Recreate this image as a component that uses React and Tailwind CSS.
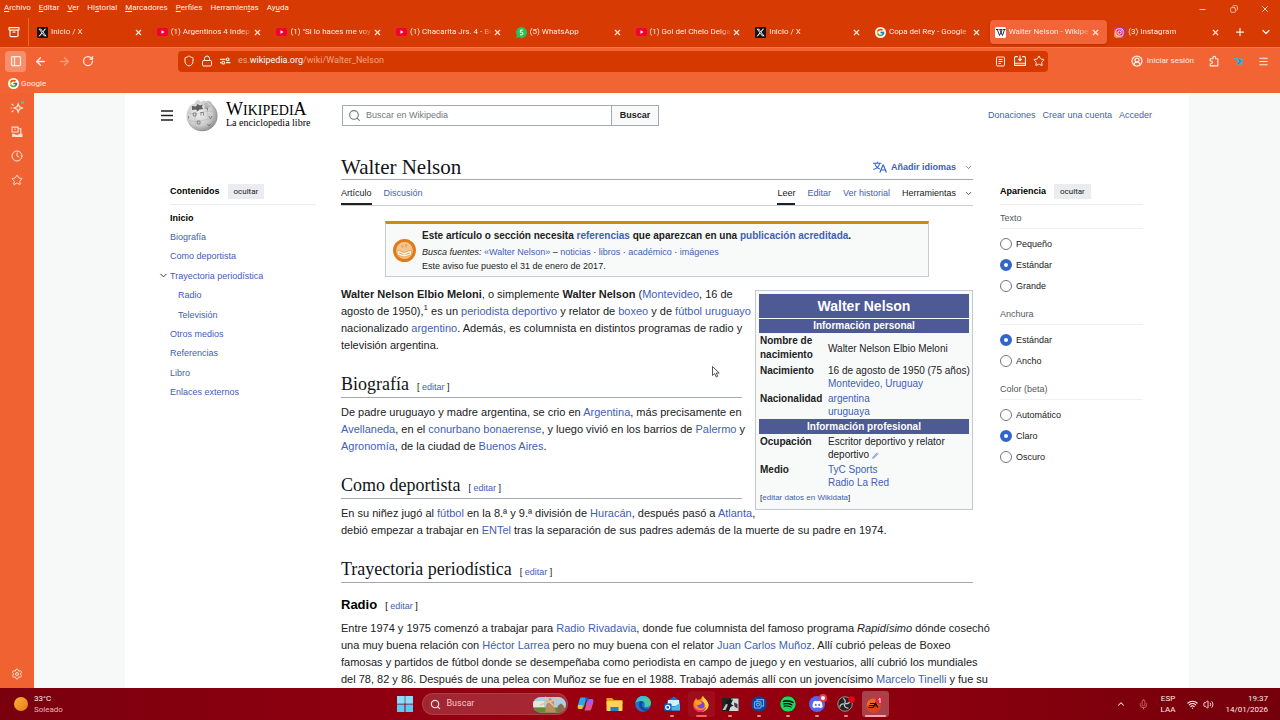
import React from "react";
import {
  Archive, X, Plus, ChevronDown, ChevronUp, Minus, Copy, PanelLeft, ArrowLeft, ArrowRight, RotateCw,
  Shield, Lock, Star, CircleUserRound, Menu, Clock, Settings, Search, Mic, Wifi, Volume2,
} from "lucide-react";
import { FaXTwitter, FaInstagram, FaSpotify, FaDiscord } from "react-icons/fa6";
import { FcGoogle } from "react-icons/fc";

/* ---------- Favicons ---------- */

const XIcon = () => (
  <span className="flex size-[11px] items-center justify-center rounded-[1px] bg-[#141414] text-white">
    <FaXTwitter size={9} />
  </span>
);
const YouTube = () => (
  <svg viewBox="0 0 22 16" className="h-2 w-[11px]">
    <rect width="22" height="16" rx="4" fill="#f00034" />
    <path d="M9 4.500v7l6-3.500z" fill="#fff" />
  </svg>
);
const WhatsApp = () => (
  <svg viewBox="0 0 22 22" className="size-[11px]">
    <path d="M11 0a11 11 0 1 1-5.300 20.700L0 22l1.500-5.500A11 11 0 0 1 11 0z" fill="#25c459" />
    <path d="M14 6H9l-.6 4.600c2-1 5.400-.6 5.400 2.400 0 3-3.600 3.500-5.800 2" fill="none" stroke="#fff" strokeWidth="2" />
  </svg>
);
const Google = () => (
  <span className="flex size-[11px] items-center justify-center rounded-full bg-white">
    <FcGoogle size={9} />
  </span>
);
const WikiW = () => (
  <svg viewBox="0 0 22 22" className="size-[11px]">
    <rect width="22" height="22" rx="3" fill="#fff" />
    <path d="M2 5h5M9 5h5M16 5h5M4.500 5l4.500 12 5.500-12M9.500 5L15 17l4-12" fill="none" stroke="#111" strokeWidth="1.700" />
  </svg>
);
const Instagram = () => (
  <span className="flex size-[11px] items-center justify-center rounded-[3px] bg-linear-to-tr from-[#fdb42c] via-[#e1246b] to-[#8a24d8] text-white">
    <FaInstagram size={9} />
  </span>
);

const tabs = [
  { icon: XIcon, title: "Inicio / X" },
  { icon: YouTube, title: "(1) Argentinos 4 Indep" },
  { icon: YouTube, title: "(1) \"Si lo haces me voy\"" },
  { icon: YouTube, title: "(1) Chacarita Jrs. 4 - Bo" },
  { icon: WhatsApp, title: "(5) WhatsApp" },
  { icon: YouTube, title: "(1) Gol del Chelo Delga" },
  { icon: XIcon, title: "Inicio / X" },
  { icon: Google, title: "Copa del Rey - Google" },
  { icon: WikiW, title: "Walter Nelson - Wikipe", active: true },
  { icon: Instagram, title: "(3) Instagram" },
];

const menus = [
  ["", "A", "rchivo"], ["", "E", "ditar"], ["", "V", "er"], ["Hi", "s", "torial"],
  ["", "M", "arcadores"], ["", "P", "erfiles"], ["Herramien", "t", "as"], ["Ay", "u", "da"],
];

/* ---------- Browser chrome ---------- */

function MenuBar() {
  return (
    <div className="flex h-[18px] items-center justify-between pl-1">
      <nav className="flex gap-2 pb-[2px]" aria-label="Menú">
        {menus.map(([a, b, c]) => (
          <button key={a + b + c} className="leading-[12px]">{a}<u>{b}</u>{c}</button>
        ))}
      </nav>
      <div className="flex items-center">
        <button aria-label="Minimizar" className="flex w-[31px] justify-center"><Minus size={9} /></button>
        <button aria-label="Restaurar" className="flex w-[31px] justify-center"><Copy size={8} className="-scale-x-100" /></button>
        <button aria-label="Cerrar" className="flex w-[31px] justify-center"><X size={10} /></button>
      </div>
    </div>
  );
}

function TabBar() {
  return (
    <div className="flex h-[29px] items-center pb-px">
      <button aria-label="Ver pestañas" className="flex h-7 w-[29px] items-center justify-center border-r border-[#f0622f]">
        <Archive size={12} strokeWidth={2.500} />
      </button>
      <div className="flex min-w-0 flex-1 pl-[2px]">
        {tabs.map(({ icon: Icon, title, active }, i) => (
          <div key={i} className={"mx-px flex h-6 min-w-0 flex-1 items-center rounded-[4px] pl-[5px] pr-[7px] " + (active ? "bg-[#f26539] shadow-sm" : "")}>
            <span className="flex w-[11px] shrink-0 justify-center"><Icon /></span>
            <span className="ml-[3px] min-w-0 flex-1 whitespace-nowrap mask-r-from-85%">{title}</span>
            <button aria-label={"Cerrar " + title} className="shrink-0"><X size={9} strokeWidth={3} /></button>
          </div>
        ))}
      </div>
      <button aria-label="Nueva pestaña" className="flex w-6 justify-center"><Plus size={12} strokeWidth={2.500} /></button>
      <button aria-label="Listar pestañas" className="flex w-7 justify-center"><ChevronDown size={12} strokeWidth={2.500} /></button>
    </div>
  );
}

const Perms = () => (
  <svg viewBox="0 0 20 14" className="h-2 w-[11px]" fill="none" stroke="currentColor" strokeWidth="2">
    <path d="M0 4h10M11 10h8M0 10h3" /><circle cx="14" cy="4" r="2.500" /><circle cx="6" cy="10" r="2.500" />
  </svg>
);
const Reader = () => (
  <svg viewBox="0 0 22 22" className="size-[11px]" fill="none" stroke="currentColor" strokeWidth="2">
    <rect x="3" y="2" width="16" height="18" rx="2" /><path d="M7 7h8M7 11h8M7 15h5" />
  </svg>
);
const Install = () => (
  <svg viewBox="0 0 22 22" className="size-3" fill="none" stroke="currentColor" strokeWidth="2">
    <path d="M7 3H3a2 2 0 0 0-2 2v14h20V5a2 2 0 0 0-2-2h-4M1 15h20M11 1v9M7.500 7L11 10.500 14.500 7" />
  </svg>
);
const Extension = () => (
  <svg viewBox="0 0 22 22" className="size-3" fill="none" stroke="currentColor" strokeWidth="2" strokeLinejoin="round">
    <path d="M4 7h5V5a2.500 2.500 0 0 1 5 0v2h4v13H4v-4h1.500a2.500 2.500 0 0 0 0-5H4z" />
  </svg>
);
const Bird = () => (
  <svg viewBox="0 0 22 18" className="h-[9px] w-[11px]">
    <path d="M1 2h8l3 3 4-3 5 4-3 2 1 5-4 4-4-3-5 2 3-7-2-4H1z" fill="#36b6d6" />
    <path d="M12 5l3 4-5 5" stroke="#1f6f93" strokeWidth="2" fill="none" />
  </svg>
);

function NavBar() {
  return (
    <div className="flex h-[27px] items-center border-t border-[#f47a50]">
      <div className="flex w-[178px] items-center pl-[5px]">
        <button aria-label="Barra lateral" className="mr-[2px] flex size-[21px] items-center justify-center rounded-[4px] bg-[#f78f6c]"><PanelLeft size={12} strokeWidth={2.500} /></button>
        <button aria-label="Atrás" className="flex w-6 justify-center"><ArrowLeft size={13} strokeWidth={2.500} /></button>
        <button aria-label="Adelante" className="flex w-6 justify-center opacity-40"><ArrowRight size={13} strokeWidth={2.500} /></button>
        <button aria-label="Recargar" className="flex w-6 justify-center"><RotateCw size={12} strokeWidth={2.500} /></button>
      </div>
      <div className="flex h-[21px] min-w-0 flex-1 items-center rounded-[4px] bg-[#d63900] pl-1">
        <button aria-label="Protección" className="flex w-[19px] justify-start pl-px"><Shield size={12} /></button>
        <button aria-label="Seguridad" className="flex w-[19px] justify-start"><Lock size={12} /></button>
        <button aria-label="Permisos" className="flex w-[18px] justify-start"><Perms /></button>
        <div role="textbox" aria-label="Dirección" className="flex-1 whitespace-nowrap text-[9px] text-[#f5a184]">
          es.<span className="text-white">wikipedia.org</span>/wiki/Walter_Nelson
        </div>
        <button aria-label="Vista de lectura" className="flex w-[19px] justify-center"><Reader /></button>
        <button aria-label="Instalar" className="flex w-[19px] justify-center"><Install /></button>
        <button aria-label="Marcar página" className="flex w-[19px] justify-center"><Star size={12} /></button>
      </div>
      <div className="flex w-[232px] items-center justify-end pr-1">
        <button className="mr-[7px] flex items-center gap-[4px] whitespace-nowrap"><CircleUserRound size={12} strokeWidth={2.500} />Iniciar sesión</button>
        <button aria-label="Extensiones" className="flex w-[25px] justify-center"><Extension /></button>
        <button aria-label="Complemento" className="flex w-[25px] justify-center"><Bird /></button>
        <button aria-label="Menú de la aplicación" className="flex w-[25px] justify-center"><Menu size={11} strokeWidth={2.500} /></button>
      </div>
    </div>
  );
}

const Sparkle = () => (
  <svg viewBox="0 0 24 24" className="size-[14px]" fill="none" stroke="currentColor" strokeWidth="2">
    <path d="M14 5l2 5 5 2-5 2-2 5-2-5-5-2 5-2z" />
    <path d="M3 5l3 3M3 19l3-3M1 12h2" />
    <rect x="19" y="0" width="5" height="5" fill="#6fb583" stroke="none" />
  </svg>
);
const Devices = () => (
  <svg viewBox="0 0 22 22" className="size-3" fill="none" stroke="currentColor" strokeWidth="2">
    <path d="M2 2h11v9H2zM6 6h3M13 5h5v10" /><path d="M2 14h4l2 2h5l2-2h6v6H2z" fill="currentColor" stroke="none" />
  </svg>
);

function SideBar() {
  return (
    <aside className="flex w-[34px] shrink-0 flex-col items-center bg-[#f16232] pb-2 pt-[3px] text-[#ffe3d4]">
      <button aria-label="Asistente" className="flex h-6 items-center"><Sparkle /></button>
      <button aria-label="Pestañas de otros dispositivos" className="flex h-6 items-center"><Devices /></button>
      <button aria-label="Historial" className="flex h-6 items-center"><Clock size={12} /></button>
      <button aria-label="Marcadores" className="flex h-6 items-center"><Star size={12} /></button>
      <button aria-label="Configuración" className="mt-auto"><Settings size={12} /></button>
    </aside>
  );
}

/* ---------- Wikipedia ---------- */

const A = ({ children }) => <a href="#" className="text-[#3f60b5]">{children}</a>;

const Globe = () => (
  <svg viewBox="0 0 66 66" className="size-[33px]">
    <defs>
      <radialGradient id="globe" cx="0.400" cy="0.400" r="0.650">
        <stop offset="0" stopColor="#f1f1f1" /><stop offset="0.650" stopColor="#cbcbcb" /><stop offset="1" stopColor="#858585" />
      </radialGradient>
    </defs>
    <path d="M20 4l6-2 3 4 6-3 5 2 4-2 6 3 2 4A31 31 0 1 1 11 11l6-2z" fill="url(#globe)" />
    <path d="M12 14l8 1 3-5 5 3 5-2-1 6 3 3-8 1-4 4-3-4-8 1z" fill="#606060" />
    <path d="M36 9l6-2 1 5 7 2-5 4-7-2z" fill="#b5b5b5" />
    <g fill="none" stroke="#b3b3b3" strokeWidth="1">
      <path d="M3 27c10 4 18 3 28 0s20-3 32 0M3 42c12 4 20 4 30 1s20-3 28-1M21 24c-4 12-4 26 1 37M40 16c5 12 6 32 1 47M52 12c6 10 8 26 5 38" />
    </g>
    <g fill="none" stroke="#6b6b6b" strokeWidth="1.500">
      <path d="M14 28h6v6h-5zM29 27h6v6M30 27v6M37 18h6v5M46 34l3 6 3-6M22 44h6v6h-5zM43 50l3 4 3-4M5 34v5" />
    </g>
  </svg>
);

function WikiHeader() {
  return (
    <header className="flex h-[43px] items-center pl-9 pr-[37px] pt-px">
      <button aria-label="Menú principal" className="mr-[13px] text-[#202122]">
        <svg viewBox="0 0 24 22" className="h-[11px] w-3"><path d="M0 2h24M0 11h24M0 20h24" stroke="currentColor" strokeWidth="3" /></svg>
      </button>
      <a href="#" className="flex w-[156px] items-center gap-[7px] font-['Liberation_Serif',serif] text-black">
        <Globe />
        <span className="flex flex-col whitespace-nowrap">
          <span className="text-[14px] leading-[15px]"><span className="text-[18px]">W</span>IKIPEDI<span className="text-[18px]">A</span></span>
          <span className="text-[10px] leading-[10px]">La enciclopedia libre</span>
        </span>
      </a>
      <form className="flex h-[21px] w-[317px]" onSubmit={(e) => e.preventDefault()}>
        <label className="flex flex-1 items-center gap-[5px] border border-[#a2a9b1] bg-white pl-[5px] text-[#72777d]">
          <Search size={13} className="shrink-0" />
          <input aria-label="Buscar en Wikipedia" placeholder="Buscar en Wikipedia" className="w-full min-w-0 text-[9px] outline-none placeholder:text-[#72777d]" />
        </label>
        <button className="-ml-px w-12 border border-[#a2a9b1] bg-[#f8faf9] text-[9px] font-bold text-[#202122]">Buscar</button>
      </form>
      <nav aria-label="Herramientas personales" className="ml-auto flex gap-[7px]">
        <A>Donaciones</A><A>Crear una cuenta</A><A>Acceder</A>
      </nav>
    </header>
  );
}

const toc = [
  ["Biografía"], ["Como deportista"], ["Trayectoria periodística", "parent"], ["Radio", "child"], ["Televisión", "child"],
  ["Otros medios"], ["Referencias"], ["Libro"], ["Enlaces externos"],
];

const PanelHead = ({ title }) => (
  <div className="mb-[2px] flex h-[27px] items-center gap-2 border-b border-[#eaecf0]">
    <h2 className="font-bold text-black">{title}</h2>
    <button className="h-[15px] bg-[#eaecf0] px-[6px] font-['Roboto',sans-serif] text-[8px] leading-[15px]">ocultar</button>
  </div>
);

function Toc() {
  return (
    <nav aria-label="Contenidos" className="w-[146px] shrink-0 pt-[42px]">
      <PanelHead title="Contenidos" />
      <ul className="mt-[3px] grid h-[194px] auto-rows-fr items-center">
        <li className="font-bold text-black">Inicio</li>
        {toc.map(([t, kind]) => (
          <li key={t} className={kind === "child" ? "pl-2" : kind === "parent" ? "-ml-3 flex items-center gap-px" : ""}>
            {kind === "parent" && <button aria-label="Contraer sección"><ChevronDown size={11} /></button>}
            <A>{t}</A>
          </li>
        ))}
      </ul>
    </nav>
  );
}

const Option = ({ group, text, checked }) => (
  <label className="flex h-[21px] items-center gap-[4px]">
    <input type="radio" name={group} defaultChecked={checked} className="size-3 appearance-none rounded-full border border-[#72777d] bg-white checked:border-4 checked:border-[#36c]" />
    {text}
  </label>
);

const OptionGroup = ({ title, options, value }) => (
  <fieldset className="mb-[7px]">
    <legend className="mb-1 flex h-[22px] w-full items-center border-b border-[#eef0f2] text-[#54595d]">{title}</legend>
    {options.map((o) => <Option key={o} group={title} text={o} checked={o === value} />)}
  </fieldset>
);

function Appearance() {
  return (
    <aside className="w-[143px] shrink-0 pt-[42px]">
      <PanelHead title="Apariencia" />
      <OptionGroup title="Texto" options={["Pequeño", "Estándar", "Grande"]} value="Estándar" />
      <OptionGroup title="Anchura" options={["Estándar", "Ancho"]} value="Estándar" />
      <OptionGroup title="Color (beta)" options={["Automático", "Claro", "Oscuro"]} value="Claro" />
    </aside>
  );
}

const Edit = () => <span className="font-['Liberation_Sans',sans-serif] text-[9px] font-normal">[ <A>editar</A> ]</span>;

const H2 = ({ children, beside }) => (
  <div className={"mb-[6px] mt-[18px] flow-root " + (beside ? "pr-[12px]" : "")}>
    <h2 className="flex h-[26px] items-baseline gap-2 border-b border-[#a2a9b1] font-['Liberation_Serif',serif] text-[18px] leading-[24px] text-[#101418]">
      {children}<Edit />
    </h2>
  </div>
);

const P = ({ children }) => <p className="whitespace-nowrap text-[11px] leading-[17px]">{children}</p>;

function Notice() {
  return (
    <div className="mx-11 mt-[15px] flex h-14 items-center border border-t-[3px] border-[#c8ccd1] border-t-[#d88512] bg-[#f8faf9] pl-[6px]">
      <svg viewBox="0 0 50 50" className="size-[25px] shrink-0">
        <circle cx="25" cy="25" r="20" fill="#f3c48d" stroke="#e07b1c" strokeWidth="6" />
        <path d="M10 24l14 5 15-5v10l-15 4-13-4z" fill="#fff3df" stroke="#e39a4e" strokeWidth="1.500" />
        <path d="M19 15l2 4 2-4M28 14v5M26 14h5M14 30l9 3M27 33l9-3" stroke="#df8b3c" strokeWidth="1.500" fill="none" />
      </svg>
      <div className="ml-[5px] whitespace-nowrap">
        <p className="text-[10px] font-bold leading-[17px]">Este artículo o sección necesita <A>referencias</A> que aparezcan en una <A>publicación acreditada</A>.</p>
        <p className="leading-[16px]"><i>Busca fuentes:</i> <A>«Walter Nelson»</A> – <A>noticias</A> · <A>libros</A> · <A>académico</A> · <A>imágenes</A></p>
        <p className="leading-[13px]">Este aviso fue puesto el 31 de enero de 2017.</p>
      </div>
    </div>
  );
}

const Row = ({ label, children }) => (
  <tr>
    <th scope="row" className="py-px pl-px text-left align-top leading-[14px]">{label}</th>
    <td className="whitespace-nowrap py-px leading-[13px]">{children}</td>
  </tr>
);

function Infobox() {
  return (
    <div className="float-right ml-px mt-1 mb-2 w-[218px] border border-[#c4c9cf] bg-[#f8faf9] p-[3px] text-[10px]">
      <table className="w-full table-fixed border-collapse">
        <colgroup><col className="w-[69px]" /><col /></colgroup>
        <tbody>
          <tr><th colSpan={2} className="h-6 border-b border-[#f8faf9] bg-[#4d5a96] text-[14px] leading-[20px] text-white">Walter Nelson</th></tr>
          <tr><th colSpan={2} className="h-[15px] border-t border-[#f8faf9] bg-[#4d5a96] leading-[14px] text-white">Información personal</th></tr>
          <Row label={<>Nombre de<br />nacimiento</>}>Walter Nelson Elbio Meloni</Row>
          <Row label="Nacimiento">16 de agosto de 1950 (75 años)<br /><A>Montevideo, Uruguay</A></Row>
          <Row label="Nacionalidad"><A>argentina</A><br /><A>uruguaya</A></Row>
          <tr><th colSpan={2} className="h-[15px] bg-[#4d5a96] leading-[14px] text-white">Información profesional</th></tr>
          <Row label="Ocupación">
            Escritor deportivo y relator<br />deportivo{" "}
            <svg viewBox="0 0 12 12" className="inline size-[7px]"><path d="M1 11l1-3 6-6 2 2-6 6zM9 1l2 2" fill="#a9b6e8" stroke="#7384c9" /></svg>
          </Row>
          <Row label="Medio"><A>TyC Sports</A><br /><A>Radio La Red</A></Row>
        </tbody>
      </table>
      <p className="pl-px text-[8px] leading-[16px]">[<A>editar datos en Wikidata</A>]</p>
    </div>
  );
}

const LanguageIcon = () => (
  <svg viewBox="0 0 20 20" className="size-[14px]" fill="#36c">
    <path d="M20 18h-1.440a.6.6 0 0 1-.4-.12.800.8 0 0 1-.23-.31L17 15h-5l-1 2.540a.8.8 0 0 1-.22.300.6.6 0 0 1-.4.140H9l4.550-11.470h1.890zm-3.530-4.310L14.890 9.500a12 12 0 0 1-.39-1.240q-.09.370-.19.690l-.19.560-1.580 4.190zm-6.300-1.580a13.400 13.400 0 0 1-2.910-1.410 11.460 11.460 0 0 0 2.810-5.370H12V4H7.310a4 4 0 0 0-.2-.56C6.870 2.790 6.600 2 6.600 2l-1.470.5s.4.890.6 1.500H0v1.330h2.150A11.230 11.230 0 0 0 5 10.700a17.200 17.200 0 0 1-5 2.100q.56.820.870 1.380a23.300 23.300 0 0 0 5.220-2.510 15.600 15.600 0 0 0 3.560 1.770zM3.630 5.330h4.910a8.100 8.100 0 0 1-2.450 4.450 9.100 9.100 0 0 1-2.460-4.450" />
  </svg>
);

const PageTab = ({ children, active }) => (
  <a href="#" className={"flex items-center border-b-2 pt-[3px] " + (active ? "border-[#202122]" : "border-transparent text-[#3f60b5]")}>{children}</a>
);

function Article() {
  return (
    <article className="min-w-0 flex-1 pt-[19px]">
      <div className="flex h-[25px] items-center justify-between border-b border-[#a2a9b1]">
        <h1 className="font-['Liberation_Serif',serif] text-[21px] leading-[24px] text-[#101418]">Walter Nelson</h1>
        <button className="flex items-center gap-1 font-bold text-[#3f60b5]">
          <LanguageIcon />Añadir idiomas<ChevronDown size={9} className="ml-1" />
        </button>
      </div>
      <div className="flex h-[26px] items-stretch justify-between border-b border-[#c8ccd1]">
        <nav aria-label="Espacios" className="flex items-stretch gap-3">
          <PageTab active>Artículo</PageTab>
          <PageTab>Discusión</PageTab>
        </nav>
        <nav aria-label="Vistas" className="flex items-stretch gap-3">
          <PageTab active>Leer</PageTab>
          <PageTab>Editar</PageTab>
          <PageTab>Ver historial</PageTab>
          <button className="flex items-center gap-2 pt-px">Herramientas<ChevronDown size={9} /></button>
        </nav>
      </div>
      <Notice />
      <div className="pt-[9px]">
        <Infobox />
        <P>
          <b>Walter Nelson Elbio Meloni</b>, o simplemente <b>Walter Nelson</b> (<A>Montevideo</A>, 16 de<br />
          agosto de 1950),<span className="align-super text-[8px] leading-none">1</span> es un <A>periodista deportivo</A> y relator de <A>boxeo</A> y de <A>fútbol uruguayo</A><br />
          nacionalizado <A>argentino</A>. Además, es columnista en distintos programas de radio y<br />
          televisión argentina.
        </P>
        <H2 beside>Biografía</H2>
        <P>
          De padre uruguayo y madre argentina, se crio en <A>Argentina</A>, más precisamente en<br />
          <A>Avellaneda</A>, en el <A>conurbano bonaerense</A>, y luego vivió en los barrios de <A>Palermo</A> y<br />
          <A>Agronomía</A>, de la ciudad de <A>Buenos Aires</A>.
        </P>
        <H2 beside>Como deportista</H2>
        <P>
          En su niñez jugó al <A>fútbol</A> en la 8.ª y 9.ª división de <A>Huracán</A>, después pasó a <A>Atlanta</A>,<br />
          debió empezar a trabajar en <A>ENTel</A> tras la separación de sus padres además de la muerte de su padre en 1974.
        </P>
        <H2>Trayectoria periodística</H2>
        <h3 className="mb-[5px] mt-3 flex h-5 items-baseline gap-2 text-[13px] font-bold leading-5 text-black">Radio<Edit /></h3>
        <P>
          Entre 1974 y 1975 comenzó a trabajar para <A>Radio Rivadavia</A>, donde fue columnista del famoso programa <i>Rapidísimo</i> dónde cosechó<br />
          una muy buena relación con <A>Héctor Larrea</A> pero no muy buena con el relator <A>Juan Carlos Muñoz</A>. Allí cubrió peleas de Boxeo<br />
          famosas y partidos de fútbol donde se desempeñaba como periodista en campo de juego y en vestuarios, allí cubrió los mundiales<br />
          del 78, 82 y 86. Después de una pelea con Muñoz se fue en el 1988. Trabajó además allí con un jovencísimo <A>Marcelo Tinelli</A> y fue su
        </P>
      </div>
    </article>
  );
}

/* ---------- Taskbar ---------- */

const Start = () => (
  <svg viewBox="0 0 32 32" className="size-4"><path d="M0 0h15v15H0zM17 0h15v15H17zM0 17h15v15H0zM17 17h15v15H17z" fill="#5cc8f5" /><path d="M0 0h15v15H0zM17 0h15v15H17z" fill="#8adcfb" /></svg>
);
const Windmill = () => (
  <svg viewBox="0 0 66 34" className="h-[17px] w-[33px]">
    <defs><clipPath id="mill"><rect y="2" width="66" height="31" rx="15" /></clipPath></defs>
    <g clipPath="url(#mill)">
      <rect width="66" height="34" fill="#a9cfe2" /><rect y="23" width="66" height="11" fill="#5f8d2e" />
      <path d="M0 10h22v12H0z" fill="#e8e4dc" /><path d="M24 33l4-24 6-5 7 6 5 23z" fill="#b98b5e" />
      <path d="M48 33l2-14 6-4 5 4 3 14z" fill="#8a6a4a" />
    </g>
    <path d="M14 18L54 4M24 2l20 20" stroke="#dfc4a0" strokeWidth="3.500" />
  </svg>
);
const Copilot = () => (
  <svg viewBox="0 0 34 32" className="h-4 w-[17px]">
    <path d="M9 3h10l-5 18-3 5H5c-4 0-4-4-3-8l3-11c1-3 2-4 4-4z" fill="#27a8e8" /><path d="M2 18h10l-2 8H5c-4 0-4-4-3-8z" fill="#f2c21a" />
    <path d="M25 29H15l5-18 3-5h6c4 0 4 4 3 8l-3 11c-1 3-2 4-4 4z" fill="#e9508e" /><path d="M20 11l3-5h6c4 0 4 4 3 8l-1 3H18z" fill="#a45ee6" />
    <path d="M15 3h6l3 3-4 5z" fill="#2456c9" />
  </svg>
);
const Folder = () => (
  <svg viewBox="0 0 34 30" className="h-[15px] w-[17px]"><path d="M1 2h11l4 4h17v8H1z" fill="#e0a020" /><rect x="1" y="8" width="32" height="20" rx="2" fill="#fbd35b" /><path d="M9 20h16v8H9z" fill="#2d7cc4" /></svg>
);
const Edge = () => (
  <svg viewBox="0 0 32 32" className="size-4">
    <circle cx="16" cy="16" r="15.500" fill="#1f74d0" /><path d="M1 14C3 5 9 0 16 0c9 0 16 6 16 14 0 5-4 8-9 8-3 0-5-1-4-3 3-6-3-10-9-9-4 0-7 2-9 4z" fill="#42cda0" />
    <path d="M10 10c-5 8-1 18 10 20 4 0 7-2 9-5-6 2-14 0-15-7 0-3 1-5 3-5-1-2-4-3-7-3z" fill="#13499c" />
    <path d="M1 14C3 5 9 0 16 0c5 0 9 2 12 5C16 2 7 5 1 14z" fill="#3bb5e8" />
  </svg>
);
const Outlook = () => (
  <svg viewBox="0 0 34 32" className="h-4 w-[17px]"><path d="M6 10L20 1l12 9v19H6z" fill="#1c6fd0" /><path d="M8 8h22v12H8z" fill="#d7eefb" /><path d="M6 14l13 8 13-8v15H6z" fill="#47b5f2" /><rect y="15" width="15" height="15" rx="2" fill="#0e59b0" /><circle cx="7.500" cy="22.500" r="4" fill="none" stroke="#fff" strokeWidth="2.500" /></svg>
);
const Firefox = () => (
  <svg viewBox="0 0 32 32" className="size-4">
    <path d="M4 8l2-4 3 4c2-1 5-1 6-1 1-3 3-5 5-7 1 4 5 5 7 9 4 5 5 9 3 14-2 5-8 9-14 9C7 32 0 26 1 17c0-4 1-7 3-9z" fill="#ff8a1c" />
    <path d="M20 0c1 4 5 5 7 9 4 5 5 9 3 14-2 4-6 7-10 8 6-6 6-14 0-20-2-3-2-7 0-11z" fill="#ffd43b" />
    <path d="M1 17c2 8 9 13 17 11 4-1 7-4 8-7 0 6-5 11-11 11C7 32 0 26 1 17z" fill="#f0246a" />
    <circle cx="16" cy="18" r="7" fill="#7b46d8" /><path d="M5 10c3-2 7-1 9 2 3 0 4 1 4 3-3 0-3 2-6 3-5 0-7-4-7-8z" fill="#ff9d2a" />
  </svg>
);
const Photo = () => (
  <svg viewBox="0 0 34 26" className="h-[13px] w-[17px]"><rect width="34" height="26" fill="#222326" /><path d="M8 26L19 1h14v25z" fill="#d3d5d9" /><path d="M10 3h12l-4 9 5 3-6 3-3 8H4z" fill="#17181a" /><path d="M1 24L8 12l4 1-5 11z" fill="#bfc2c7" /><path d="M24 9l7 3v9l-6-4z" fill="#3b3d41" /></svg>
);
const BlueApp = () => (
  <svg viewBox="0 0 32 32" className="size-4"><circle cx="16" cy="16" r="15.500" fill="#123f94" /><g fill="none" stroke="#63a7f2" strokeWidth="2.500"><rect x="7" y="11" width="13" height="13" rx="2" /><path d="M12 11V7h13v13h-5" /><circle cx="14" cy="17" r="3" /></g></svg>
);
const Obs = () => (
  <svg viewBox="0 0 36 32" className="h-4 w-[18px]"><circle cx="16" cy="16" r="14.500" fill="#252326" stroke="#b9b4b6" strokeWidth="1.500" /><g fill="none" stroke="#c9c5c7" strokeWidth="2.500"><path d="M15 15c3-4 1-9-3-10M16 15c5 1 10-1 10-6M15 16c-1 5 3 9 8 8M14 16c-5-1-9 3-8 7" /></g><circle cx="29" cy="7" r="6.500" fill="#e30613" /></svg>
);
const Ea = () => (
  <svg viewBox="0 0 36 34" className="h-[17px] w-[18px]">
    <circle cx="15" cy="19" r="14" fill="#f2671f" /><path d="M1 19a14 14 0 0 0 28 0z" fill="#e0401f" />
    <path d="M8 15h9M6 19h9M5 23h9l5-9 5 9M17 20h6" stroke="#1a1010" strokeWidth="2.200" fill="none" />
    <circle cx="27" cy="9" r="8.500" fill="#e0283c" /><path d="M25 7l3-2v9" stroke="#fff" strokeWidth="2" fill="none" />
  </svg>
);
const Spotify = () => <span className="rounded-full bg-black text-[#1ed760]"><FaSpotify size={16} /></span>;
const Discord = () => (
  <span className="relative flex size-4 items-center justify-center rounded-full bg-[#5865f2] text-white">
    <FaDiscord size={11} />
    <span className="absolute -right-[2px] -top-[2px] size-2 rounded-full border-2 border-[#e2404d] bg-white" />
  </span>
);

const apps = [
  ["Copilot", Copilot], ["Explorador", Folder], ["Edge", Edge], ["Outlook", Outlook, "open"], ["Firefox", Firefox, "wide"],
  ["Juego", Photo, "open"], ["Capturas", BlueApp, "open"], ["Spotify", Spotify, "open"], ["Discord", Discord, "open"],
  ["OBS", Obs, "open"], ["EA", Ea, "active"],
];
const cell = { open: "", wide: "bg-white/5", active: "bg-white/25" };
const bar = { open: "w-1 bg-[#e58a8c]", wide: "w-[11px] bg-[#ee6a55]", active: "w-[21px] bg-[#f3a6ab]" };

function Taskbar() {
  return (
    <footer className="flex h-8 shrink-0 items-center bg-linear-to-r from-[#7a000e] via-[#9d0010] to-[#74000b] text-[8px] text-[#ffe9ea]">
      <button className="flex flex-1 items-center gap-[6px] pl-[14px] text-left leading-[11px]">
        <span className="size-[14px] rounded-full bg-linear-to-br from-[#f9b233] to-[#e8791a]" />
        <span>33°C<br /><span className="text-[#e8b3b6]">Soleado</span></span>
      </button>
      <div className="mr-[2px] flex h-full items-center">
        <button aria-label="Inicio" className="flex w-[29px] justify-center"><Start /></button>
        <label className="ml-[2px] mr-[3px] flex h-[22px] w-[146px] items-center gap-[6px] rounded-full border border-white/10 bg-white/15 pl-[7px] pr-px">
          <Search size={11} strokeWidth={2.500} className="shrink-0" />
          <input aria-label="Buscar en Windows" placeholder="Buscar" className="w-0 flex-1 text-[9px] outline-none placeholder:text-[#f0c9cc]" />
          <Windmill />
        </label>
        {apps.map(([name, Icon, state]) => (
          <button key={name} aria-label={name} className="flex h-full w-[29px] items-center justify-center">
            <span className={"relative flex h-[26px] w-[27px] items-center justify-center rounded-[3px] " + (state ? cell[state] : "")}>
              <Icon />
              {state && <span className={"absolute bottom-0 h-[2px] rounded-full " + bar[state]} />}
            </span>
          </button>
        ))}
      </div>
      <div className="flex flex-1 items-center justify-end pr-3 leading-[11px]">
        <button aria-label="Iconos ocultos" className="mr-3"><ChevronUp size={10} strokeWidth={2.500} /></button>
        <button aria-label="Micrófono" className="mr-3 text-[#d8656b]"><Mic size={11} /></button>
        <button className="mr-3 text-center">ESP<br />LAA</button>
        <button aria-label="Red y sonido" className="mr-[11px] flex gap-[5px]"><Wifi size={11} strokeWidth={2.500} /><Volume2 size={11} /></button>
        <button className="text-right">19:37<br />14/01/2026</button>
      </div>
    </footer>
  );
}

export default function App() {
  return (
    <div className="relative flex h-screen flex-col overflow-hidden font-['Roboto','Noto_Sans',sans-serif] text-[8px]">
      <div className="shrink-0 bg-[#d73a02] text-[#ffeee6]">
        <MenuBar />
        <TabBar />
        <div className="bg-[#f26433]">
          <NavBar />
          <div className="flex h-[19px] items-center pl-2">
            <a href="#" className="flex items-center gap-[2px]"><Google />Google</a>
          </div>
        </div>
      </div>
      <div className="flex min-h-0 flex-1">
        <SideBar />
        <main className="min-w-0 flex-1 overflow-hidden bg-[#f7f9f9] font-['Liberation_Sans',Arial,sans-serif] text-[9px] leading-[14px] text-[#202122]">
          <div className="mx-auto min-h-full max-w-[1064px] bg-white">
            <WikiHeader />
            <div className="flex pl-[45px] pr-[46px]">
              <Toc />
              <div className="ml-[25px] mr-[27px] flex min-w-0 flex-1"><Article /></div>
              <Appearance />
            </div>
          </div>
        </main>
      </div>
      <Taskbar />
      <svg viewBox="0 0 16 24" className="pointer-events-none absolute left-[712px] top-[366px] h-3 w-2">
        <path d="M1 1v18l4.500-4 3 7 3-1.500-3-6.500h6z" fill="#fff" stroke="#444" strokeWidth="1.800" />
      </svg>
    </div>
  );
}
